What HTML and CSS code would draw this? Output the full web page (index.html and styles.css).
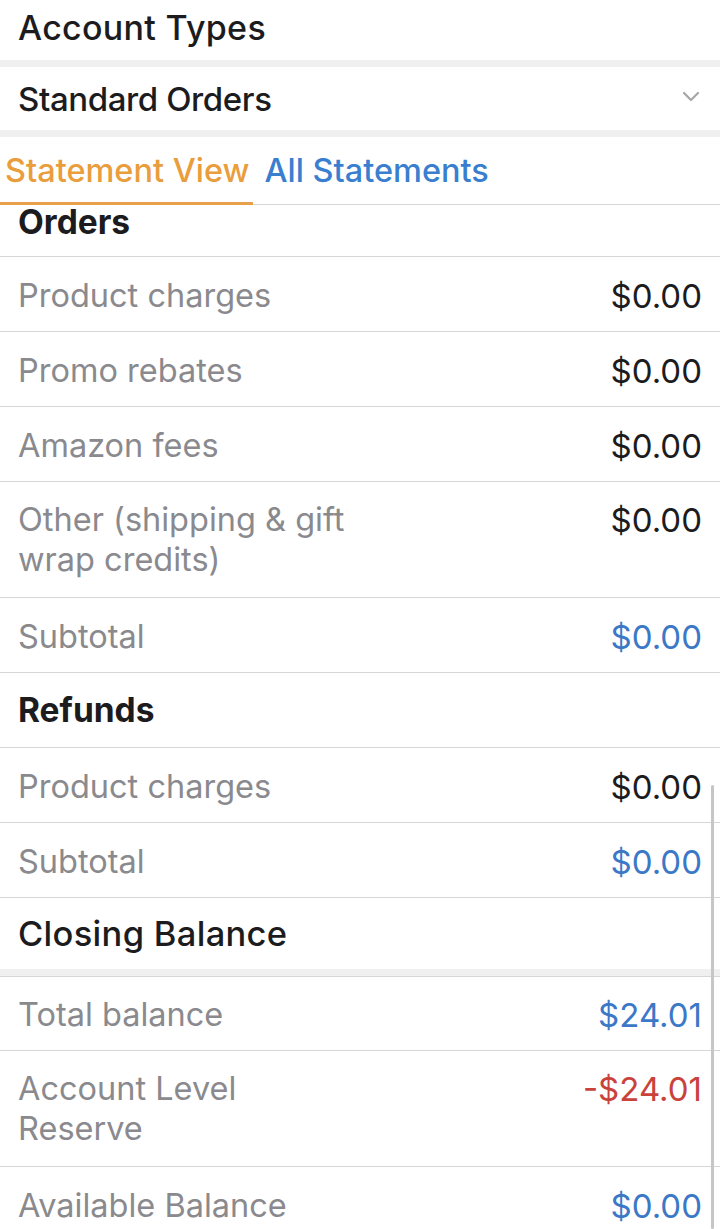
FILE: index.html
```html
<!DOCTYPE html>
<html>
<head>
<meta charset="utf-8">
<link rel="stylesheet" href="styles.css">
</head>
<body>
<div class="page">
  <div class="title-row"><span class="title">Account Types</span></div>
  <div class="band"></div>
  <div class="select-row">
    <span class="title">Standard Orders</span>
    <svg class="chevron" width="18" height="12" viewBox="0 0 18 12"><path d="M2 2 L9 9 L16 2" fill="none" stroke="#a6a6a8" stroke-width="2.2" stroke-linecap="round" stroke-linejoin="round"/></svg>
  </div>
  <div class="band"></div>
  <div class="tabs">
    <div class="tab active">Statement View</div>
    <div class="tab">All Statements</div>
  </div>
  <div class="content">
    <div class="list">
      <div class="row head first"><span class="section">Orders</span></div>
      <div class="row"><span class="label">Product charges</span><span class="value">$0.00</span></div>
      <div class="row"><span class="label">Promo rebates</span><span class="value">$0.00</span></div>
      <div class="row"><span class="label">Amazon fees</span><span class="value">$0.00</span></div>
      <div class="row tall"><span class="label narrow">Other (shipping &amp; gift wrap credits)</span><span class="value">$0.00</span></div>
      <div class="row"><span class="label">Subtotal</span><span class="value blue">$0.00</span></div>
      <div class="row head"><span class="section">Refunds</span></div>
      <div class="row"><span class="label">Product charges</span><span class="value">$0.00</span></div>
      <div class="row"><span class="label">Subtotal</span><span class="value blue">$0.00</span></div>
      <div class="row closing"><span class="title wide">Closing Balance</span></div>
      <div class="band"></div>
      <div class="row topline"><span class="label">Total balance</span><span class="value blue">$24.01</span></div>
      <div class="row tall"><span class="label narrow">Account Level Reserve</span><span class="value red">-$24.01</span></div>
      <div class="row"><span class="label">Available Balance</span><span class="value blue">$0.00</span></div>
    </div>
    <div class="scrollbar"></div>
  </div>
</div>
</body>
</html>
```

FILE: styles.css
```css
html, body {
  margin: 0;
  padding: 0;
  background: #ffffff;
}
body {
  font-family: Inter, "Noto Sans", "Liberation Sans", sans-serif;
  color: #1c1c1e;
  -webkit-font-smoothing: antialiased;
}
.page {
  width: 720px;
  height: 1229px;
  overflow: hidden;
  display: flex;
  flex-direction: column;
}
.title-row {
  height: 60px;
  display: flex;
  align-items: center;
  padding: 0 18px 4px;
  box-sizing: border-box;
  flex: none;
}
.title {
  font-size: 34px;
  font-weight: 500;
  color: #1c1c1e;
  line-height: 40px;
  letter-spacing: 0.3px;
}
.title.wide {
  font-size: 34.5px;
}
.band {
  height: 7px;
  background: #f0f0f1;
  flex: none;
}
.select-row {
  height: 63px;
  display: flex;
  align-items: center;
  justify-content: space-between;
  padding: 0 20px 0 18px;
  box-sizing: border-box;
  flex: none;
}
.select-row .title {
  font-size: 33px;
  letter-spacing: -0.4px;
}
.chevron {
  margin-top: -4px;
}
.tabs {
  height: 68px;
  display: flex;
  align-items: stretch;
  border-bottom: 1px solid #d6d6d8;
  box-sizing: border-box;
  flex: none;
  gap: 6px;
}
.tab {
  font-size: 32.5px;
  font-weight: 500;
  color: #3a7fcf;
  padding: 0 5px;
  display: flex;
  align-items: center;
  line-height: 40px;
  white-space: nowrap;
  box-sizing: border-box;
}
.tab.active {
  color: #e99d3c;
  border-bottom: 3px solid #e9a04a;
  margin-bottom: -1px;
  padding: 2px 4px 0 5px;
}
.content {
  flex: 1;
  position: relative;
  overflow: hidden;
}
.row {
  height: 75px;
  display: flex;
  justify-content: space-between;
  align-items: center;
  padding: 3px 18px 0;
  box-sizing: border-box;
  border-bottom: 1px solid #d6d6d8;
}
.row.tall {
  height: 116px;
  align-items: flex-start;
  padding-top: 18px;
}
.row.head {
  padding-top: 0;
}
.row.head.first {
  height: 52px;
  padding-top: 0;
  padding-bottom: 18px;
}
.row.closing {
  height: 71px;
  border-bottom: none;
  padding-top: 0;
  padding-bottom: 0;
}
.row.topline {
  border-top: 1px solid #d6d6d8;
}
.section {
  font-size: 33.5px;
  font-weight: 700;
  color: #1c1c1e;
  line-height: 32px;
}
.label {
  font-size: 32.5px;
  color: #8a8a8e;
  line-height: 40px;
}
.label.narrow {
  max-width: 340px;
}
.value {
  font-size: 33px;
  color: #1c1c1e;
  line-height: 40px;
}
.value.blue {
  color: #3b78c7;
}
.value.red {
  color: #c9423b;
}
.scrollbar {
  position: absolute;
  right: 6px;
  top: 580px;
  bottom: 0;
  width: 3px;
  border-radius: 2px;
  background: #c6c6c8;
}
```
